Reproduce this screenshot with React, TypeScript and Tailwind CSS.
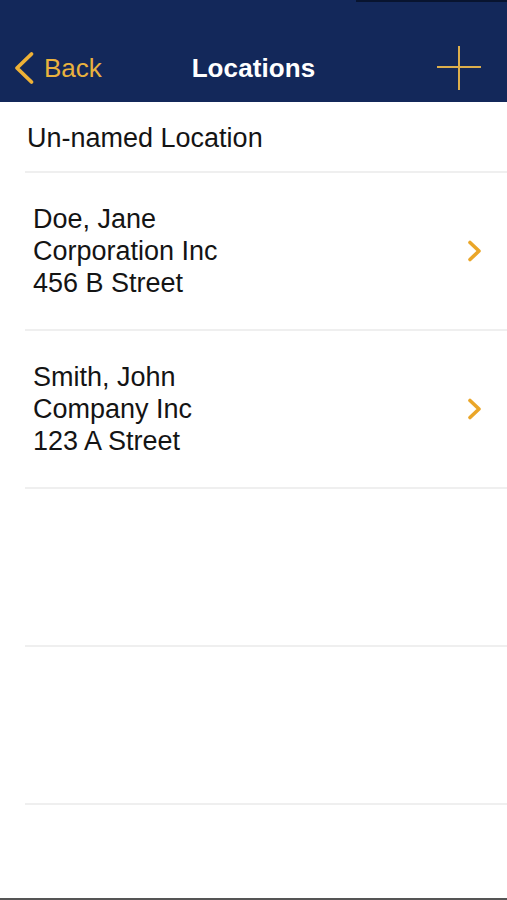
import React from "react";

function ChevronRight() {
  return (
    <svg width="16" height="22" viewBox="0 0 16 22" fill="none">
      <polyline points="3,2.5 12,11 3,19.5" stroke="#eaa629" strokeWidth="3.6" strokeLinecap="round" strokeLinejoin="round" />
    </svg>
  );
}

function AddressRow({ lines }: { lines: string[] }) {
  return (
    <div className="ml-[25px] h-[158px] border-b-2 border-[#efefef] flex items-center justify-between pl-[8px] pr-[24px]">
      <div className="text-[27px] leading-[32px] text-[#141414]">
        {lines.map((l) => (
          <div key={l}>{l}</div>
        ))}
      </div>
      <ChevronRight />
    </div>
  );
}

export default function App() {
  return (
    <div
      className="w-[507px] h-[900px] bg-white flex flex-col overflow-hidden"
      style={{ fontFamily: '"Liberation Sans", Arial, sans-serif' }}
    >
      <div className="h-[102px] bg-[#13285a] flex flex-col shrink-0">
        <div className="h-[2px] flex justify-end">
          <div className="w-[151px] bg-[#08142f]" />
        </div>
        <div className="h-[32px]" />
        <div className="h-[68px] grid grid-cols-[1fr_auto_1fr] items-center">
          <div className="flex items-center pl-[13px] gap-[9px]">
            <svg width="22" height="34" viewBox="0 0 22 34" fill="none">
              <polyline points="18.5,3 4,17 18.5,31" stroke="#eeb136" strokeWidth="3.8" strokeLinecap="round" strokeLinejoin="round" />
            </svg>
            <span className="text-[26px] text-[#e9b23e]">Back</span>
          </div>
          <div className="text-[26px] font-bold text-white tracking-[0.1px]">Locations</div>
          <div className="flex justify-end pr-[25px]">
            <svg width="46" height="46" viewBox="0 0 46 46" fill="none">
              <line x1="23" y1="1" x2="23" y2="45" stroke="#dcae4c" strokeWidth="2" />
              <line x1="1" y1="22" x2="45" y2="22" stroke="#dcae4c" strokeWidth="2" />
            </svg>
          </div>
        </div>
      </div>
      <div className="ml-[25px] h-[71px] border-b-2 border-[#efefef] flex items-center pl-[2px] pt-[4px]">
        <span className="text-[27px] text-[#141414]">Un-named Location</span>
      </div>
      <AddressRow lines={["Doe, Jane", "Corporation Inc", "456 B Street"]} />
      <AddressRow lines={["Smith, John", "Company Inc", "123 A Street"]} />
      <div className="ml-[25px] h-[158px] border-b-2 border-[#efefef]" />
      <div className="ml-[25px] h-[158px] border-b-2 border-[#efefef]" />
      <div className="flex-1" />
      <div className="h-[2px] bg-[#555555]" />
    </div>
  );
}
